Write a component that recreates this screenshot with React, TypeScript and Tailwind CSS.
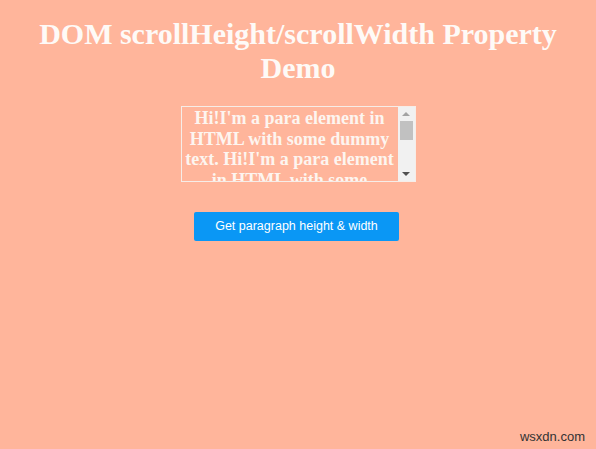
export default function App() {
  const text =
    "Hi!I'm a para element in HTML with some dummy text. Hi!I'm a para element in HTML with some dummy text. Hi!I'm a para element in HTML with some dummy text.";

  return (
    <div className="relative min-h-[449px] w-full bg-[#ffb59b] font-['Liberation_Serif',serif]">
      <h1 className="px-6 pt-[17px] text-center text-[30px] font-bold leading-[34px] text-[#fefaf7]">
        DOM scrollHeight/scrollWidth Property Demo
      </h1>
      <div className="mt-[21px] flex justify-center">
        <div className="flex h-[76px] w-[235px] border border-[#f6ede8]">
          <div className="flex-1 overflow-hidden px-[2px] pt-[1px] text-center text-[18px] font-bold leading-[20.5px] text-[#fdf5f0]">
            {text}
          </div>
          <div className="flex w-[17px] flex-col items-center bg-[#f1f1f1]">
            <div className="flex h-[14px] items-center justify-center">
              <div className="h-0 w-0 border-x-[4px] border-b-[4px] border-x-transparent border-b-[#a3a3a3]" />
            </div>
            <div className="h-[19px] w-[13px] bg-[#c1c1c1]" />
            <div className="flex-1" />
            <div className="flex h-[14px] items-center justify-center">
              <div className="h-0 w-0 border-x-[4px] border-t-[4px] border-x-transparent border-t-[#505050]" />
            </div>
          </div>
        </div>
      </div>
      <div className="mt-[30px] flex justify-center">
        <button className="mr-[3px] h-[29px] w-[205px] rounded-[2px] bg-[#0a97f5] font-['Liberation_Sans',Arial,sans-serif] text-[12.5px] text-white">
          Get paragraph height &amp; width
        </button>
      </div>
      <div className="absolute bottom-[3px] right-[11px] font-['Liberation_Sans',Arial,sans-serif] text-[13px] text-[#333333]">
        wsxdn.com
      </div>
    </div>
  );
}
